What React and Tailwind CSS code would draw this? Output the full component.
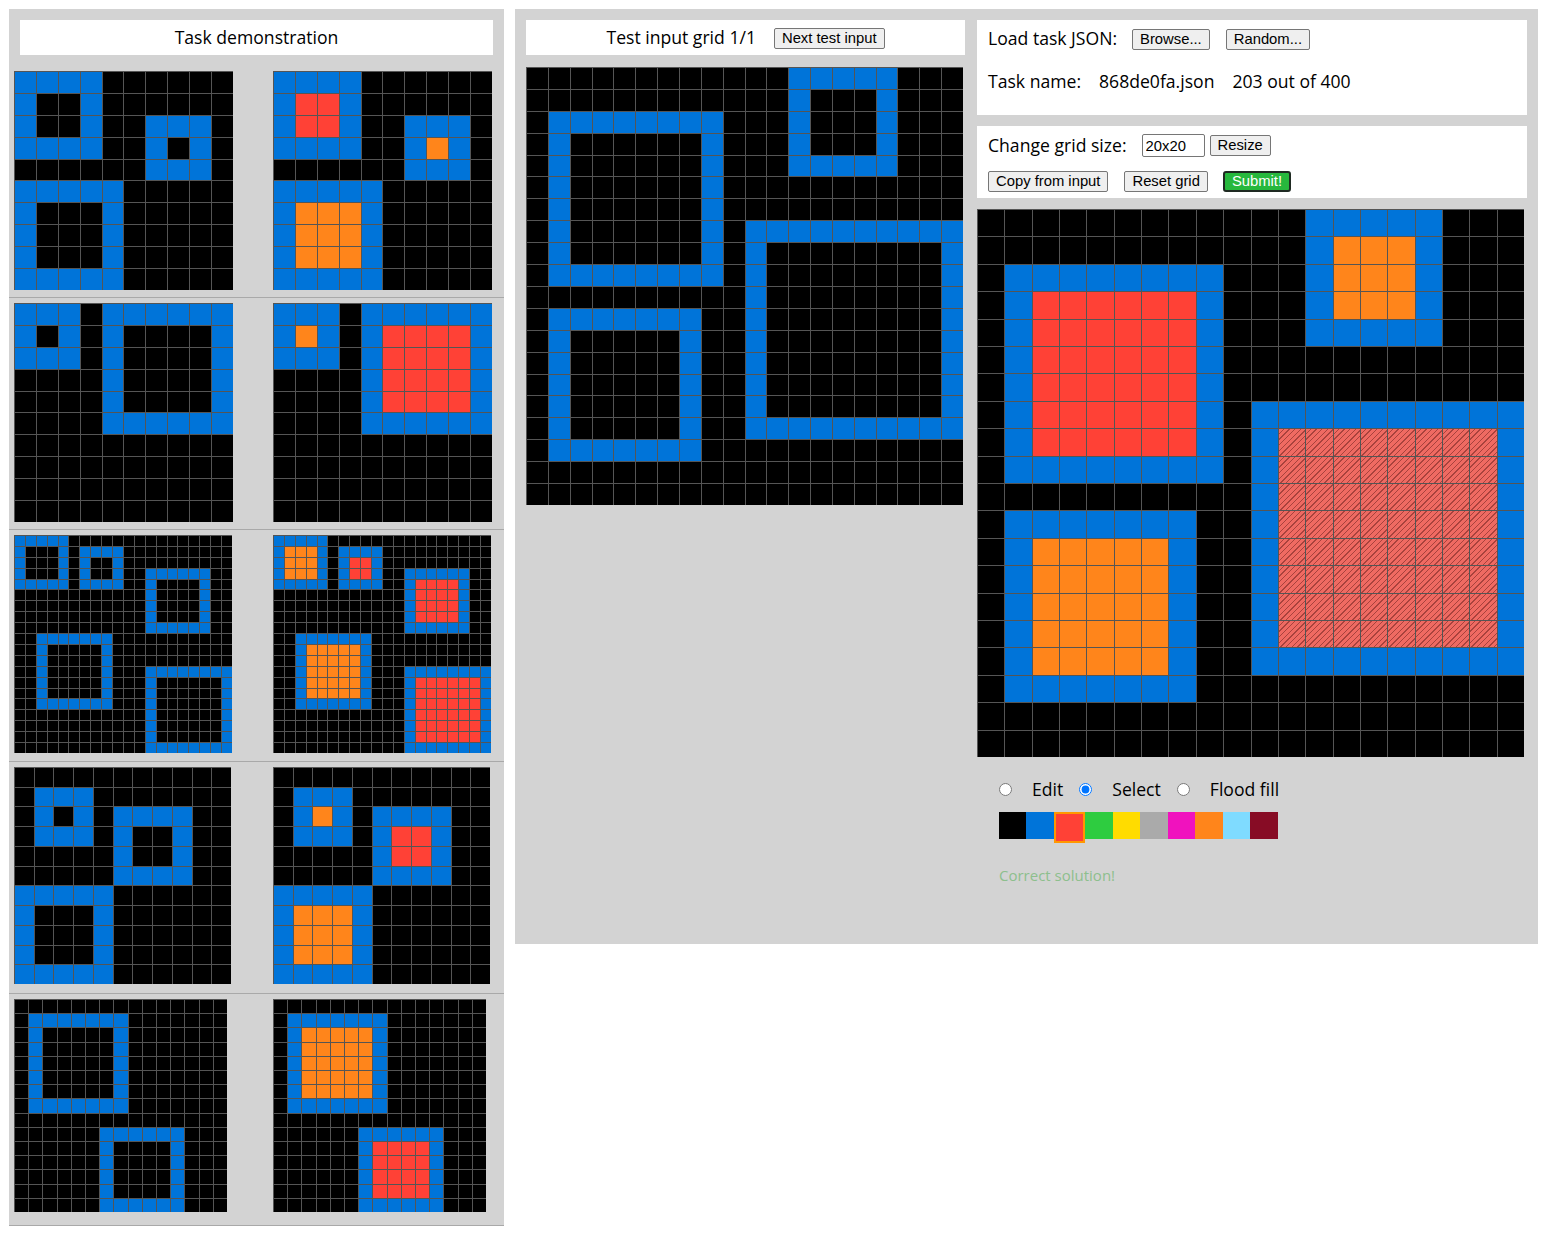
import React from "react";

const COLOR = {
  0: "bg-black",
  1: "bg-[#0074d9]",
  2: "bg-[#ff4136]",
  7: "bg-[#ff851b]",
  9: "bg-[repeating-linear-gradient(135deg,#ef6a62_0px,#ef6a62_3px,#a8423d_3px,#a8423d_4px)]",
};

function build(n, boxes, solve, selectedIdx = -1) {
  const g = Array.from({ length: n }, () => Array(n).fill(0));
  boxes.forEach(([r, c, s], bi) => {
    for (let i = 0; i < s; i++)
      for (let j = 0; j < s; j++) {
        const rr = r + i;
        const cc = c + j;
        if (rr >= n || cc >= n) continue;
        const edge = i === 0 || j === 0 || i === s - 1 || j === s - 1;
        if (edge) g[rr][cc] = 1;
        else if (solve) g[rr][cc] = bi === selectedIdx ? 9 : (s - 2) % 2 === 0 ? 2 : 7;
      }
  });
  return g;
}

function Grid({ data, cls }) {
  return (
    <div className={"grid gap-px bg-[#555555] pl-px pt-px " + cls}>
      {data.flat().map((v, i) => (
        <div key={i} className={COLOR[v]} />
      ))}
    </div>
  );
}

const PAIRS = [
  { n: 10, boxes: [[0, 0, 4], [2, 6, 3], [5, 0, 5]], cls: "grid-cols-10 grid-rows-10 w-[219px] h-[219px]" },
  { n: 10, boxes: [[0, 0, 3], [0, 4, 6]], cls: "grid-cols-10 grid-rows-10 w-[219px] h-[219px]" },
  {
    n: 20,
    boxes: [[0, 0, 5], [1, 6, 4], [3, 12, 6], [9, 2, 7], [12, 12, 8]],
    cls: "grid-cols-20 grid-rows-20 w-[218px] h-[218px]",
  },
  { n: 11, boxes: [[1, 1, 3], [2, 5, 4], [6, 0, 5]], cls: "grid-cols-11 grid-rows-11 w-[217px] h-[217px]" },
  { n: 15, boxes: [[1, 1, 7], [9, 6, 6]], cls: "grid-cols-15 grid-rows-15 w-[213px] h-[213px]" },
];

const TEST_BOXES = [[0, 12, 5], [2, 1, 8], [7, 10, 10], [11, 1, 7]];

const PALETTE = [
  "bg-black w-[27px]",
  "bg-[#0074d9] w-[28px]",
  null,
  "bg-[#2ecc40] w-[28px]",
  "bg-[#ffdc00] w-[27px]",
  "bg-[#aaaaaa] w-[28px]",
  "bg-[#f012be] w-[27px]",
  "bg-[#ff851b] w-[28px]",
  "bg-[#7fdbff] w-[27px]",
  "bg-[#870c25] w-[28px]",
];

const BTN =
  "h-[21px] px-[7px] bg-[#efefef] border border-[#767676] rounded-[2px] text-[14.8px] leading-[17px] text-black font-['Liberation_Sans',Arial,sans-serif] whitespace-nowrap";

export default function App() {
  return (
    <div className="font-['Open_Sans','Noto_Sans',sans-serif] text-black bg-white min-h-[1253px] w-[1546px] flex items-start pt-[9px] pl-[9px] gap-[11px]">
      {/* Demonstration panel */}
      <div className="w-[495px] bg-[#d3d3d3] pt-[11px]">
        <div className="mx-[11px] h-[35px] bg-white flex items-center justify-center text-[17.6px]">
          Task demonstration
        </div>
        <div className="mt-[11px]">
          {PAIRS.map((p, i) => (
            <div key={i} className="h-[232px] pt-[5px] pl-[5px] border-b border-[#a9a9a9] flex items-start">
              <div className="w-[259px]">
                <Grid data={build(p.n, p.boxes, false)} cls={p.cls} />
              </div>
              <div>
                <Grid data={build(p.n, p.boxes, true)} cls={p.cls} />
              </div>
            </div>
          ))}
        </div>
      </div>

      {/* Right panel */}
      <div className="w-[1023px] bg-[#d3d3d3] p-[11px] flex items-start gap-[12px]">
        {/* Test input column */}
        <div className="w-[439px]">
          <div className="h-[35px] bg-white flex items-center justify-center gap-[18px] text-[17.6px]">
            <span>Test input grid 1/1</span>
            <button className={BTN + " mt-[2px]"}>Next test input</button>
          </div>
          <div className="mt-[12px]">
            <Grid data={build(20, TEST_BOXES, false)} cls="grid-cols-20 grid-rows-20 w-[437px] h-[438px]" />
          </div>
        </div>

        {/* Output column */}
        <div className="w-[550px]">
          <div className="h-[95px] bg-white px-[11px] pt-[8px] text-[17.6px]">
            <div className="h-[21px] flex items-center">
              <span>Load task JSON:</span>
              <button className={BTN + " ml-[15px] mt-[1px]"}>Browse...</button>
              <button className={BTN + " ml-[16px] mt-[1px]"}>Random...</button>
            </div>
            <div className="mt-[20px] h-[24px] flex items-center">
              <span>Task name:</span>
              <span className="ml-[18px]">868de0fa.json</span>
              <span className="ml-[18px]">203 out of 400</span>
            </div>
          </div>

          <div className="mt-[11px] h-[72px] bg-white px-[11px] pt-[8px] text-[17.6px]">
            <div className="h-[23px] flex items-center">
              <span>Change grid size:</span>
              <input
                readOnly
                value="20x20"
                className="ml-[15px] w-[63px] h-[23px] px-[3px] bg-white border border-[#767676] rounded-[2px] text-[14.8px] font-['Liberation_Sans',Arial,sans-serif] text-black"
              />
              <button className={BTN + " ml-[5px]"}>Resize</button>
            </div>
            <div className="mt-[14px] h-[21px] flex items-center">
              <button className={BTN}>Copy from input</button>
              <button className={BTN + " ml-[16px]"}>Reset grid</button>
              <button className="ml-[15px] h-[21px] px-[7px] bg-[#27b83d] border-2 border-[#1f2a22] rounded-[3px] text-[14.8px] leading-[15px] text-white font-['Liberation_Sans',Arial,sans-serif]">
                Submit!
              </button>
            </div>
          </div>

          <div className="mt-[11px]">
            <Grid data={build(20, TEST_BOXES, true, 2)} cls="grid-cols-20 grid-rows-20 w-[547px] h-[548px]" />
          </div>

          <div className="mt-[20px] h-[24px] flex items-center text-[17.6px]">
            <input type="radio" name="tool" className="ml-[22px] m-0 w-[13px] h-[13px]" />
            <label className="ml-[20px]">Edit</label>
            <input type="radio" name="tool" defaultChecked className="ml-[16px] m-0 w-[13px] h-[13px]" />
            <label className="ml-[20px]">Select</label>
            <input type="radio" name="tool" className="ml-[16px] m-0 w-[13px] h-[13px]" />
            <label className="ml-[20px]">Flood fill</label>
          </div>

          <div className="mt-[11px] ml-[22px] flex items-start">
            {PALETTE.map((c, i) =>
              c ? (
                <div key={i} className={c + " h-[27px]"} />
              ) : (
                <div key={i} className="w-[31px] h-[31px] border-2 border-[#ff9800] bg-[#ff4136]" />
              )
            )}
          </div>

          <div className="mt-[22px] ml-[22px] mb-[48px] text-[15px] leading-[20px] text-[#8dbf8d]">
            Correct solution!
          </div>
        </div>
      </div>
    </div>
  );
}
